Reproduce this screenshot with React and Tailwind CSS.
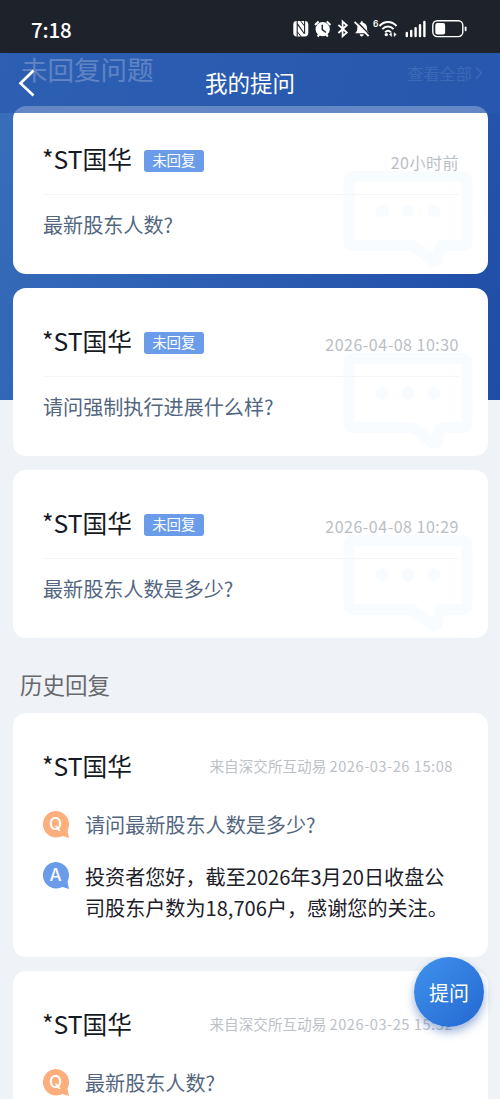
import React from 'react';

const pending = [
    { id: 1, name: '*ST国华', time: '20小时前', question: '最新股东人数?' },
    { id: 2, name: '*ST国华', time: '2026-04-08 10:30', question: '请问强制执行进展什么样?' },
    { id: 3, name: '*ST国华', time: '2026-04-08 10:29', question: '最新股东人数是多少?' },
];

const history = [
    {
        id: 1,
        name: '*ST国华',
        source: '来自深交所互动易',
        time: '2026-03-26 15:08',
        question: '请问最新股东人数是多少?',
        answer: '投资者您好，截至2026年3月20日收盘公司股东户数为18,706户，感谢您的关注。',
    },
    {
        id: 2,
        name: '*ST国华',
        source: '来自深交所互动易',
        time: '2026-03-25 15:32',
        question: '最新股东人数?',
        answer: '',
    },
];

const StatusIcons = () => (
    <svg width="176" height="20" viewBox="292 19 176 20" fill="none" stroke="#fff">
        {/* nfc */}
        <rect x="293.3" y="21" width="15" height="15.4" rx="3.4" fill="#fff" stroke="none" />
        <path d="M297.200 36.500V23.600l7.200 10.200M304.600 21v12.800M297.200 21v4" stroke="#1e222b" strokeWidth="1.100" />
        <path d="M300.300 20.500l4 5.300M301.300 37l-4-5.300" stroke="#1e222b" strokeWidth="1" />
        {/* alarm */}
        <circle cx="322.7" cy="29.2" r="7.100" fill="#fff" stroke="none" />
        <path d="M315 25l3.600-3.400M330.400 25l-3.600-3.400M317.600 36.500l2-2.400M327.800 36.500l-2-2.400" strokeWidth="2" />
        <path d="M322.300 24.800v4.900l3.600 2.800" stroke="#1e222b" strokeWidth="1.500" />
        {/* bluetooth */}
        <path d="M338.400 24.800l8.400 7.800-4.200 3.700V21.500l4.200 3.700-8.400 7.800" strokeWidth="1.800" />
        {/* bell off */}
        <path d="M355 33.200c1.800-1.200 2.300-2.700 2.300-5.200 0-3 1.700-5 3.600-5.400v-1.400h1.800v1.400c2.800.6 4.300 2.700 4.300 5.400 0 2.500.5 4 2.300 5.200zM359.700 34.300h4c-.2 2.800-3.800 2.800-4 0z" fill="#fff" stroke="none" />
        <path d="M356 20.800l14.500 14.800" stroke="#1e222b" strokeWidth="1.500" />
        <path d="M354.600 21.900l14 14.200" strokeWidth="1.800" />
        {/* wifi */}
        <path d="M379.500 26c4.700-5.400 12.300-5.400 17 0M382.300 29.200c3.300-3.700 8-3.700 11.300 0M385.200 32.200c1.800-1.800 3.900-1.800 5.700 0" strokeWidth="2" />
        <circle cx="386.300" cy="34.600" r="1.700" fill="#fff" stroke="none" />
        <path d="M389.300 34.600l2.300-2v4zM396.300 34.600l-2.300-2v4z" fill="#fff" strokeWidth="0.400" />
        {/* signal */}
        <path d="M406.800 33v3M411.200 31v5M415.600 28.300v7.700M420 25.300v10.700M424.400 22v14" strokeWidth="2.400" strokeLinecap="round" />
        {/* battery */}
        <rect x="432.800" y="20.800" width="30" height="15.800" rx="4.500" strokeWidth="1.400" />
        <rect x="435.300" y="23" width="9.800" height="11.600" rx="2" fill="#fff" stroke="none" />
        <path d="M465.600 27.300v3" strokeWidth="1.800" strokeLinecap="round" />
    </svg>
);

const StatusBar = () => (
    <div className="flex h-[53px] items-center bg-[#1e222b] pl-[31px] pt-[5px] text-white">
        <span className="w-[261px] text-[20.5px] font-medium leading-none tracking-[-0.2px]">7:18</span>
        <div className="relative flex">
            <StatusIcons />
            <span className="absolute left-[81px] top-0 font-[Inter] text-[8.5px] font-semibold leading-[10px]">6</span>
        </div>
    </div>
);

const NavBar = () => (
    <div className="flex h-[60px] items-center justify-center bg-[#2859ae]/72">
        <svg className="absolute left-[18px] top-[69px]" width="20" height="30" viewBox="0 0 20 30" fill="none">
            <path d="M15.500 1.500L2.500 14.300 15.500 26.500" stroke="#fff" strokeWidth="2.600" />
        </svg>
        <h1 className="text-[22.5px] text-white">我的提问</h1>
    </div>
);

const BubbleMark = () => (
    <svg className="absolute right-[14px] top-[64px]" width="132" height="104" viewBox="0 0 132 104" fill="none">
        <path
            d="M12 6.500H120Q125 6.500 125 11.500V70.500Q125 75.500 120 75.500H98L94 93L70 75.500H12Q7 75.500 7 70.500V11.500Q7 6.500 12 6.500Z"
            stroke="#f8fcff"
            strokeWidth="11"
            strokeLinejoin="bevel"
        />
        <circle cx="40" cy="41" r="6.500" fill="#f8fcff" />
        <circle cx="66" cy="41" r="6.500" fill="#f8fcff" />
        <circle cx="92" cy="41" r="6.500" fill="#f8fcff" />
    </svg>
);

const PendingCard = ({ item }) => (
    <div className="relative h-[168px] rounded-[13px] bg-white pl-[30px] pr-[29px]">
        <BubbleMark />
        <div className="relative flex h-[89px] items-center border-b border-[#f3f5f7] pt-[17px]">
            <span className="-ml-px -mt-[2px] text-[24.7px] leading-[30px] text-[#161a24]">{item.name}</span>
            <span className="ml-[12px] mt-[4px] flex h-[22px] w-[60px] items-center justify-center rounded-[3px] bg-[#6a9ce9] pb-px text-[14.5px] text-white">
                未回复
            </span>
            <span className="ml-auto mt-[6px] text-[16px] tracking-[0.5px] text-[#b9bec5]">{item.time}</span>
        </div>
        <p className="relative pt-[15px] text-[20.1px] leading-[30px] text-[#52667f]">{item.question}</p>
    </div>
);

const Mark = ({ letter, color }) => (
    <div className="relative mt-px flex h-[27px] w-[27px] shrink-0 items-center justify-center">
        <svg className="absolute inset-0" width="27" height="27" viewBox="0 0 27 27">
            <path d="M13.500 0A13.300 13.300 0 0 1 25.500 19.500L27 27L20.500 25A13.300 13.300 0 1 1 13.500 0Z" fill={color} />
        </svg>
        <span className="relative font-[Inter] text-[17px] font-medium leading-none text-white">{letter}</span>
    </div>
);

const HistoryCard = ({ item }) => (
    <div className="h-[244px] rounded-[13px] bg-white pl-[30px] pr-[28px] pt-[37px]">
        <div className="flex items-center">
            <span className="-ml-px text-[24.7px] leading-[30px] text-[#161a24]">{item.name}</span>
            <span className="ml-auto mr-[7px] mt-px text-[14.6px] text-[#bcc1c7]">
                {item.source} <span className="tracking-[0.55px]">{item.time}</span>
            </span>
        </div>
        <div className="-ml-px mt-[30px] flex">
            <Mark letter="Q" color="#fdae7d" />
            <p className="ml-4 text-[20.1px] leading-[30px] text-[#52667f]">{item.question}</p>
        </div>
        {item.answer && (
            <div className="-ml-px mt-[21px] flex">
                <Mark letter="A" color="#6a9ce9" />
                <p className="ml-4 text-[20.1px] leading-[31px] text-[#1c2029]">{item.answer}</p>
            </div>
        )}
    </div>
);

const App = () => {
    return (
        <div className="relative h-[1099px] w-[500px] overflow-hidden bg-[#eff2f6] bg-[linear-gradient(115deg,#3a70bb_0%,#2a5db2_55%,#1f4ca5_100%)] bg-[length:100%_400px] bg-no-repeat pl-[13px] pr-[12px] pt-[53px] font-['Noto_Sans_CJK_SC',sans-serif]">
            <div className="flex h-[53px] items-start justify-between pl-2 pr-[5px]">
                <h2 className="text-[26.5px] leading-[31px] text-white/90">未回复问题</h2>
                <span className="mt-[8px] flex items-center gap-[2px] text-[16.2px] leading-[24px] text-white/35">
                    查看全部
                    <svg width="9" height="14" viewBox="0 0 9 14" fill="none" stroke="currentColor" strokeWidth="1.500">
                        <path d="M2 1.500l5.500 5.500L2 12.500" />
                    </svg>
                </span>
            </div>

            <div className="flex flex-col gap-[14px]">
                {pending.map((item) => (
                    <PendingCard key={item.id} item={item} />
                ))}
            </div>

            <h2 className="pb-[14px] pl-[7px] pt-[31px] text-[22.5px] leading-[30px] text-[#68696d]">历史回复</h2>

            <div className="flex flex-col gap-[14px]">
                {history.map((item) => (
                    <HistoryCard key={item.id} item={item} />
                ))}
            </div>

            <div className="absolute inset-x-0 top-0">
                <StatusBar />
                <NavBar />
            </div>

            <button className="absolute left-[414px] top-[957px] h-[70px] w-[70px] rounded-full bg-linear-to-br from-[#4092ee] to-[#2468d0] pt-px text-[20px] text-white shadow-[0_5px_10px_rgba(40,90,170,0.45)]">
                提问
            </button>
        </div>
    );
};

export default App;
